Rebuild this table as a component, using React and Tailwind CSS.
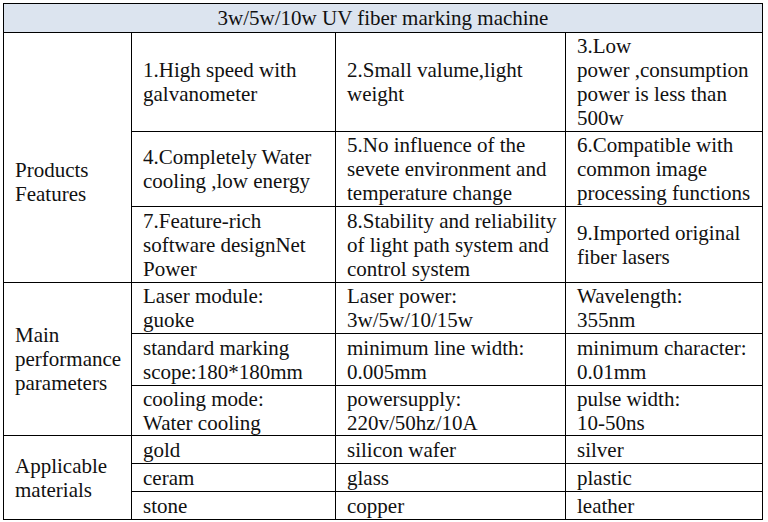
import React from 'react';

const features = [
    [
        ['1.High speed with', 'galvanometer'],
        ['2.Small valume,light', 'weight'],
        ['3.Low', 'power ,consumption', 'power is less than', '500w'],
    ],
    [
        ['4.Completely Water', 'cooling ,low energy'],
        ['5.No influence of the', 'sevete environment and', 'temperature change'],
        ['6.Compatible with', 'common image', 'processing functions'],
    ],
    [
        ['7.Feature-rich', 'software designNet', 'Power'],
        ['8.Stability and reliability', 'of light path system and', 'control system'],
        ['9.Imported original', 'fiber lasers'],
    ],
];

const performance = [
    [['Laser module:', 'guoke'], ['Laser power:', '3w/5w/10/15w'], ['Wavelength:', '355nm']],
    [['standard marking', 'scope:180*180mm'], ['minimum line width:', '0.005mm'], ['minimum character:', '0.01mm']],
    [['cooling mode:', 'Water cooling'], ['powersupply:', '220v/50hz/10A'], ['pulse width:', '10-50ns']],
];

const materials = [
    ['gold', 'silicon wafer', 'silver'],
    ['ceram', 'glass', 'plastic'],
    ['stone', 'copper', 'leather'],
];

const featureHeights = ['h-[99px]', 'h-[75px]', 'h-[76px]'];
const perfHeights = ['h-[51px]', 'h-[52px]', 'h-[50px]'];

const cell = 'border border-black px-[11px] py-0 align-middle text-left';

const Lines = ({ lines }) => (
    <>
        {lines.map((l, i) => (
            <React.Fragment key={i}>
                {i > 0 && <br />}
                {l}
            </React.Fragment>
        ))}
    </>
);

export default function App() {
    return (
        <div className="min-h-screen bg-white pt-[3px] pl-[3px]">
            <table className="table-fixed border-collapse w-[759px] font-['Liberation_Serif','Times_New_Roman',serif] text-[21px] leading-[24px] text-[#111]">
                <colgroup>
                    <col className="w-[128px]" />
                    <col className="w-[204px]" />
                    <col className="w-[230px]" />
                    <col className="w-[197px]" />
                </colgroup>
                <tbody>
                    <tr className="h-[29px]">
                        <td colSpan={4} className="border border-black bg-[#dce4ef] text-center align-middle py-0">
                            3w/5w/10w UV fiber marking machine
                        </td>
                    </tr>

                    {features.map((row, r) => (
                        <tr key={'f' + r} className={featureHeights[r]}>
                            {r === 0 && (
                                <td rowSpan={3} className={`${cell} pt-[48px]`}>
                                    Products<br />Features
                                </td>
                            )}
                            {row.map((lines, c) => (
                                <td key={c} className={`${cell} whitespace-nowrap`}>
                                    <Lines lines={lines} />
                                </td>
                            ))}
                        </tr>
                    ))}

                    {performance.map((row, r) => (
                        <tr key={'p' + r} className={perfHeights[r]}>
                            {r === 0 && (
                                <td rowSpan={3} className={cell}>
                                    Main<br />performance<br />parameters
                                </td>
                            )}
                            {row.map((lines, c) => (
                                <td key={c} className={`${cell} whitespace-nowrap`}>
                                    <Lines lines={lines} />
                                </td>
                            ))}
                        </tr>
                    ))}

                    {materials.map((row, r) => (
                        <tr key={'m' + r} className="h-[28px]">
                            {r === 0 && (
                                <td rowSpan={3} className={cell}>
                                    Applicable<br />materials
                                </td>
                            )}
                            {row.map((text, c) => (
                                <td key={c} className={cell}>{text}</td>
                            ))}
                        </tr>
                    ))}
                </tbody>
            </table>
        </div>
    );
}
